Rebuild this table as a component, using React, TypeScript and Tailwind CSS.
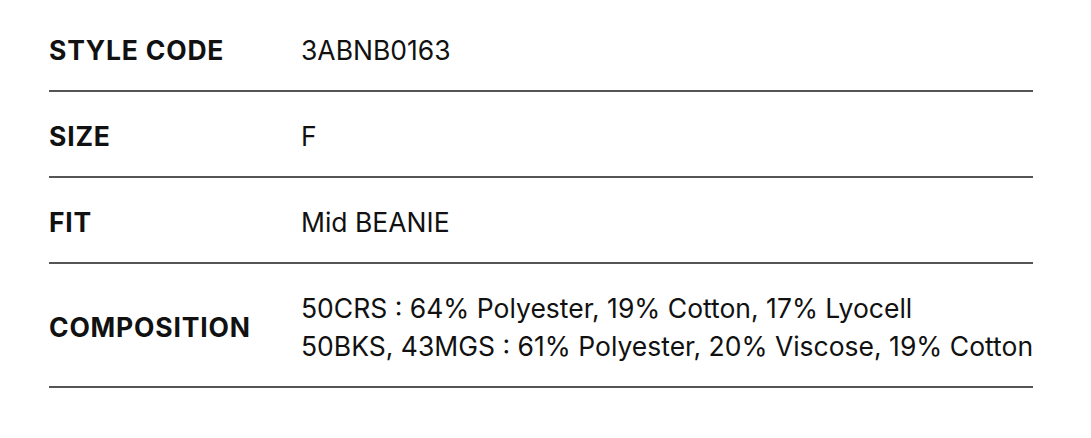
const rows = [
  { label: "STYLE CODE", value: ["3ABNB0163"] },
  { label: "SIZE", value: ["F"] },
  { label: "FIT", value: ["Mid BEANIE"] },
  {
    label: "COMPOSITION",
    value: [
      "50CRS : 64% Polyester, 19% Cotton, 17% Lyocell",
      "50BKS, 43MGS : 61% Polyester, 20% Viscose, 19% Cotton",
    ],
  },
];

export default function App() {
  return (
    <div className="w-[1091px] h-[438px] bg-white pt-1.5 pl-[49px] font-['Inter',sans-serif] text-[#111]">
      <div className="w-[984px]">
        {rows.map((row) => (
          <div
            key={row.label}
            className="flex items-center pt-[25px] pb-[21px] border-b-2 border-[#555]"
          >
            <div className="w-[252px] shrink-0 text-[26.5px] leading-[38px] font-bold tracking-[0.8px]">
              {row.label}
            </div>
            <div className="text-[26.5px] leading-[38px] whitespace-nowrap">
              {row.value.map((line) => (
                <div key={line}>{line}</div>
              ))}
            </div>
          </div>
        ))}
      </div>
    </div>
  );
}
